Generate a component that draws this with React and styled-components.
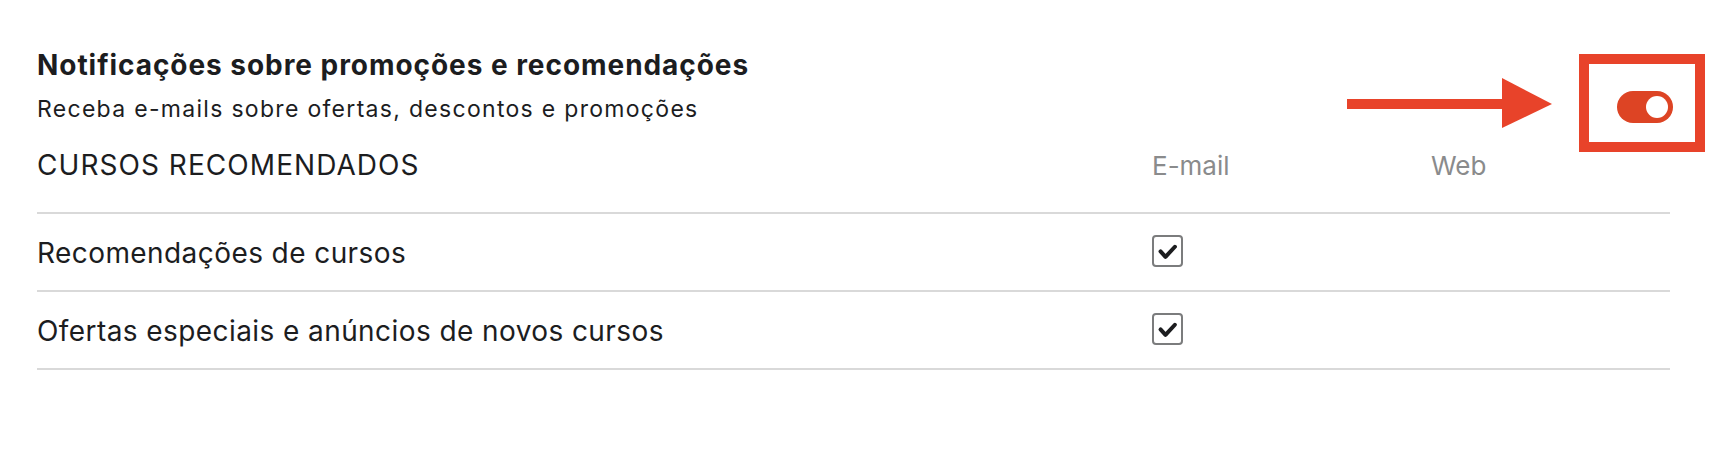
import React from "react";
import styled, { createGlobalStyle } from "styled-components";

const GlobalStyle = createGlobalStyle`
  body {
    margin: 0;
    background: #fff;
    font-family: Inter, "Noto Sans", "Liberation Sans", sans-serif;
    color: #1c1d1f;
  }
`;

const rows = [
  { label: "Recomendações de cursos", email: true },
  { label: "Ofertas especiais e anúncios de novos cursos", email: true },
];

export default function App() {
  return (
    <>
      <GlobalStyle />
      <Page>
        <Header>
          <TitleBlock>
            <Title>Notificações sobre promoções e recomendações</Title>
            <Subtitle>Receba e-mails sobre ofertas, descontos e promoções</Subtitle>
          </TitleBlock>
          <ToggleSlot>
            <Arrow viewBox="0 0 205 50" aria-hidden="true">
              <rect x="0" y="21" width="157" height="10" fill="#e8432a" />
              <polygon points="155,0 205,26 155,50" fill="#e8432a" />
            </Arrow>
            <Highlight />
            <Switch role="switch" aria-checked="true" $on>
              <Knob />
            </Switch>
          </ToggleSlot>
        </Header>

        <Table>
          <HeadRow>
            <SectionTitle>CURSOS RECOMENDADOS</SectionTitle>
            <ColHead>E-mail</ColHead>
            <ColHead>Web</ColHead>
          </HeadRow>
          {rows.map((r) => (
            <Row key={r.label}>
              <RowLabel>{r.label}</RowLabel>
              <Cell>
                {r.email && (
                  <Checkbox>
                    <svg viewBox="0 0 31 31">
                      <path
                        d="M7.5 16.5 L13.2 22.8 L24 11.2"
                        fill="none"
                        stroke="#1c1d1f"
                        strokeWidth="4.6"
                        strokeLinecap="round"
                        strokeLinejoin="round"
                      />
                    </svg>
                  </Checkbox>
                )}
              </Cell>
              <Cell />
            </Row>
          ))}
        </Table>
      </Page>
    </>
  );
}

const Page = styled.div`
  width: 1633px;
  padding: 48px 0 0 37px;
`;

const Header = styled.div`
  display: flex;
  justify-content: space-between;
  align-items: flex-start;
`;

const TitleBlock = styled.div`
  display: flex;
  flex-direction: column;
`;

const Title = styled.h2`
  margin: 0;
  font-size: 28px;
  font-weight: 700;
  line-height: 34px;
  letter-spacing: 0.95px;
  color: #1c1d1f;
`;

const Subtitle = styled.p`
  margin: 13px 0 0;
  font-size: 23px;
  line-height: 28px;
  letter-spacing: 1.3px;
  color: #1c1d1f;
`;

const ToggleSlot = styled.div`
  position: relative;
  margin-top: 43px;
  margin-right: -3px;
`;

const Arrow = styled.svg`
  position: absolute;
  left: -270px;
  top: -13px;
  width: 205px;
  height: 50px;
`;

const Highlight = styled.div`
  position: absolute;
  left: -38px;
  top: -37px;
  width: 126px;
  height: 98px;
  box-sizing: border-box;
  border: 10px solid #e8432a;
`;

const Switch = styled.div`
  width: 56px;
  height: 32px;
  border-radius: 16px;
  background: ${(p) => (p.$on ? "#dd4424" : "#c9c9c9")};
  display: flex;
  align-items: center;
  justify-content: ${(p) => (p.$on ? "flex-end" : "flex-start")};
  padding: 0 5px;
  box-sizing: border-box;
`;

const Knob = styled.span`
  width: 22px;
  height: 22px;
  border-radius: 50%;
  background: #fff;
`;

const Table = styled.div`
  margin-top: 25px;
`;

const grid = `
  display: grid;
  grid-template-columns: 1fr 279px 239px;
  border-bottom: 2px solid #d9d9d9;
`;

const HeadRow = styled.div`
  ${grid}
  align-items: baseline;
  padding-bottom: 29px;
`;

const SectionTitle = styled.div`
  font-size: 28px;
  line-height: 34px;
  letter-spacing: 1.05px;
  color: #1c1d1f;
`;

const ColHead = styled.div`
  font-size: 26px;
  line-height: 34px;
  color: #8a8b8c;
`;

const Row = styled.div`
  ${grid}
  align-items: center;
  height: 78px;
  box-sizing: border-box;
`;

const RowLabel = styled.div`
  font-size: 28px;
  line-height: 34px;
  letter-spacing: 0.42px;
  color: #1c1d1f;
  padding-top: 2px;
`;

const Cell = styled.div`
  display: flex;
  align-items: center;
`;

const Checkbox = styled.span`
  width: 31px;
  height: 32px;
  box-sizing: border-box;
  border: 2px solid #7b7c7d;
  border-radius: 4px;
  display: flex;
  align-items: center;
  justify-content: center;
  margin-top: -3px;

  svg {
    width: 27px;
    height: 27px;
  }
`;
